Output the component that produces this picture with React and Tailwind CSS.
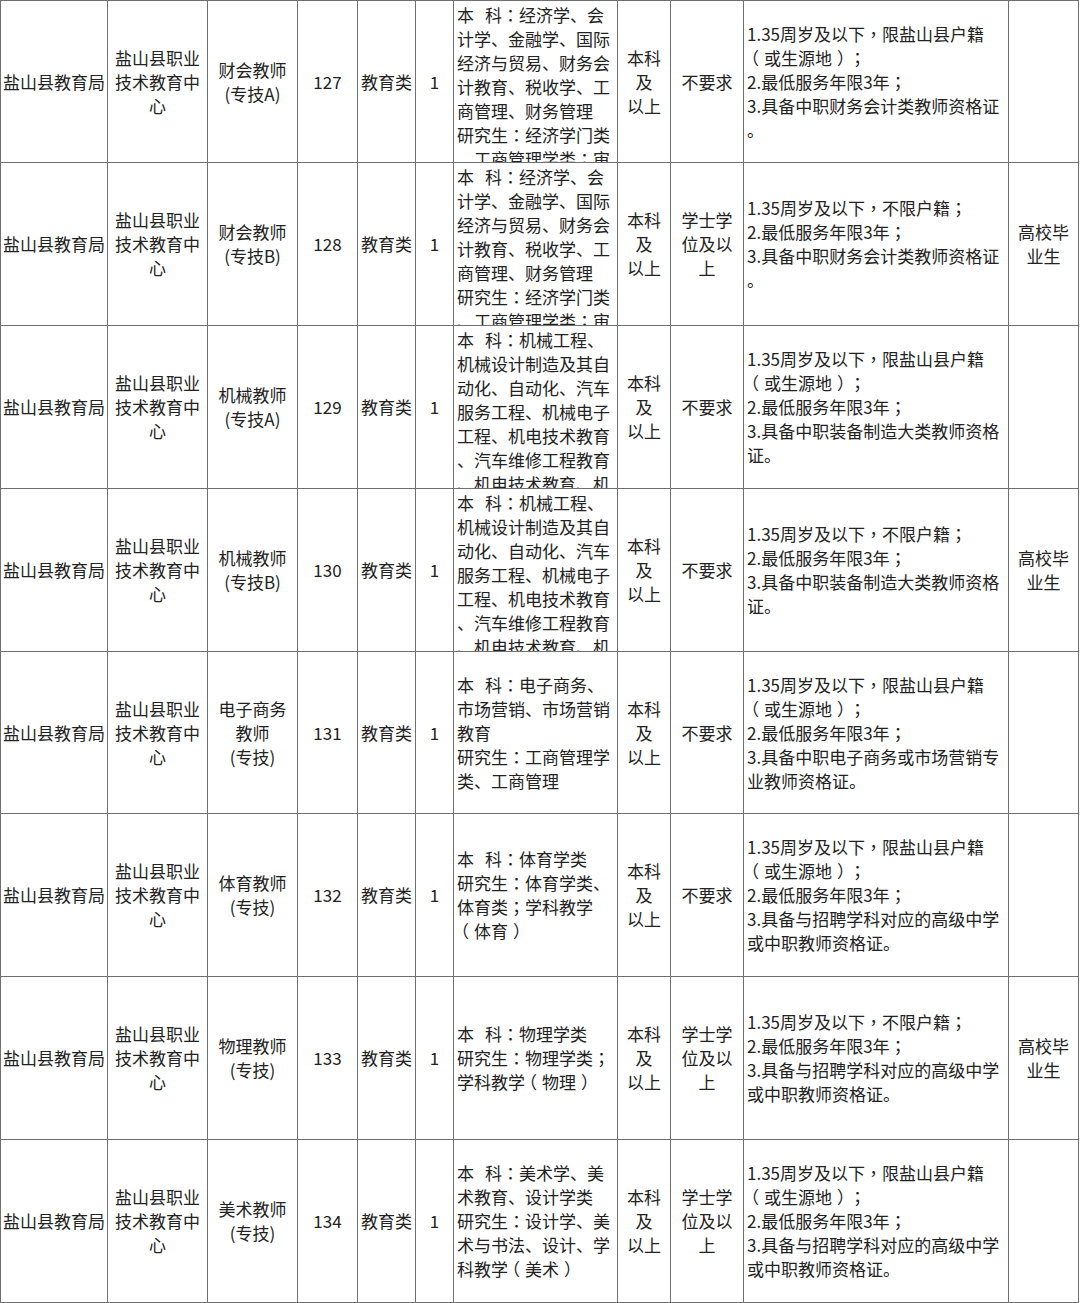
const GAP = "__GAP__";

const rows = [
  {
    post: ["财会教师", "(专技A)"],
    code: "127",
    major: [`本${GAP}科：经济学、会`, "计学、金融学、国际", "经济与贸易、财务会", "计教育、税收学、工", "商管理、财务管理", "研究生：经济学门类", "、工商管理学类；审"],
    clip: true,
    degree: ["不要求"],
    other: ["1.35周岁及以下，限盐山县户籍", "（或生源地）；", "2.最低服务年限3年；", "3.具备中职财务会计类教师资格证", "。"],
    target: [],
  },
  {
    post: ["财会教师", "(专技B)"],
    code: "128",
    major: [`本${GAP}科：经济学、会`, "计学、金融学、国际", "经济与贸易、财务会", "计教育、税收学、工", "商管理、财务管理", "研究生：经济学门类", "、工商管理学类；审"],
    clip: true,
    degree: ["学士学", "位及以", "上"],
    other: ["1.35周岁及以下，不限户籍；", "2.最低服务年限3年；", "3.具备中职财务会计类教师资格证", "。"],
    target: ["高校毕", "业生"],
  },
  {
    post: ["机械教师", "(专技A)"],
    code: "129",
    major: [`本${GAP}科：机械工程、`, "机械设计制造及其自", "动化、自动化、汽车", "服务工程、机械电子", "工程、机电技术教育", "、汽车维修工程教育", "、机电技术教育、机"],
    clip: true,
    degree: ["不要求"],
    other: ["1.35周岁及以下，限盐山县户籍", "（或生源地）；", "2.最低服务年限3年；", "3.具备中职装备制造大类教师资格", "证。"],
    target: [],
  },
  {
    post: ["机械教师", "(专技B)"],
    code: "130",
    major: [`本${GAP}科：机械工程、`, "机械设计制造及其自", "动化、自动化、汽车", "服务工程、机械电子", "工程、机电技术教育", "、汽车维修工程教育", "、机电技术教育、机"],
    clip: true,
    degree: ["不要求"],
    other: ["1.35周岁及以下，不限户籍；", "2.最低服务年限3年；", "3.具备中职装备制造大类教师资格", "证。"],
    target: ["高校毕", "业生"],
  },
  {
    post: ["电子商务", "教师", "(专技)"],
    code: "131",
    major: [`本${GAP}科：电子商务、`, "市场营销、市场营销", "教育", "研究生：工商管理学", "类、工商管理"],
    clip: false,
    degree: ["不要求"],
    other: ["1.35周岁及以下，限盐山县户籍", "（或生源地）；", "2.最低服务年限3年；", "3.具备中职电子商务或市场营销专", "业教师资格证。"],
    target: [],
  },
  {
    post: ["体育教师", "(专技)"],
    code: "132",
    major: [`本${GAP}科：体育学类`, "研究生：体育学类、", "体育类；学科教学", "（体育）"],
    clip: false,
    degree: ["不要求"],
    other: ["1.35周岁及以下，限盐山县户籍", "（或生源地）；", "2.最低服务年限3年；", "3.具备与招聘学科对应的高级中学", "或中职教师资格证。"],
    target: [],
  },
  {
    post: ["物理教师", "(专技)"],
    code: "133",
    major: [`本${GAP}科：物理学类`, "研究生：物理学类；", "学科教学（物理）"],
    clip: false,
    degree: ["学士学", "位及以", "上"],
    other: ["1.35周岁及以下，不限户籍；", "2.最低服务年限3年；", "3.具备与招聘学科对应的高级中学", "或中职教师资格证。"],
    target: ["高校毕", "业生"],
  },
  {
    post: ["美术教师", "(专技)"],
    code: "134",
    major: [`本${GAP}科：美术学、美`, "术教育、设计学类", "研究生：设计学、美", "术与书法、设计、学", "科教学（美术）"],
    clip: false,
    degree: ["学士学", "位及以", "上"],
    other: ["1.35周岁及以下，限盐山县户籍", "（或生源地）；", "2.最低服务年限3年；", "3.具备与招聘学科对应的高级中学", "或中职教师资格证。"],
    target: [],
  },
];

// full-width punctuation sits centred in its em box in the reference font
const shift = { "（": "relative -left-[5px]", "）": "relative left-[5px]" };
const Punct = ({ text }) =>
  text.split(/([：；，（）])/).map((p, i) =>
    /^[：；，（）]$/.test(p) ? (
      <span key={i} className={`inline-block w-[17px] text-center font-['Noto_Sans_CJK_TC',sans-serif] ${shift[p] || ""}`}>
        {p}
      </span>
    ) : (
      p
    )
  );

const Line = ({ text }) => {
  const parts = text.split(GAP);
  return (
    <div className="whitespace-nowrap">
      <Punct text={parts[0]} />
      {parts.length > 1 && <span className="inline-block w-[11px]" />}
      {parts[1] && <Punct text={parts[1]} />}
    </div>
  );
};

const Cell = ({ lines, align = "center", top = false }) => (
  <div
    className={`bg-white overflow-hidden flex flex-col ${top ? "justify-start pt-[2px]" : "justify-center"} ${
      align === "left" ? "items-start text-left pl-[3px]" : "items-center text-center"
    }`}
  >
    <div>
      {lines.map((l, i) => (
        <Line key={i} text={l} />
      ))}
    </div>
  </div>
);

export default function App() {
  return (
    <div className="bg-white w-[1080px] h-[1303px] font-['Noto_Sans_CJK_SC',sans-serif] text-[17px] leading-[24px] text-[#222]">
      <div className="grid w-fit grid-cols-[106px_99px_89px_59px_57px_37px_163px_52px_72px_264px_69px] grid-rows-[161px_162px_162px_162px_161px_162px_162px_162px] gap-px p-px bg-[#707070]">
        {rows.map((r) => (
          <div key={r.code} className="contents">
            <Cell lines={["盐山县教育局"]} />
            <Cell lines={["盐山县职业", "技术教育中", "心"]} />
            <Cell lines={r.post} />
            <Cell lines={[r.code]} />
            <Cell lines={["教育类"]} />
            <Cell lines={["1"]} />
            <Cell lines={r.major} align="left" top={r.clip} />
            <Cell lines={["本科", "及", "以上"]} />
            <Cell lines={r.degree} />
            <Cell lines={r.other} align="left" />
            <Cell lines={r.target} />
          </div>
        ))}
      </div>
    </div>
  );
}
